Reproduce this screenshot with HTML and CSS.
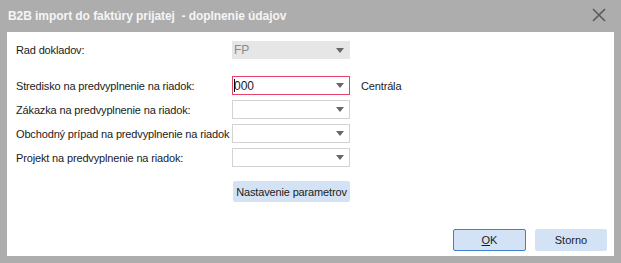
FILE: index.html
```html
<!DOCTYPE html>
<html lang="sk">
<head>
  <meta charset="UTF-8" />
  <title>B2B import do faktúry prijatej</title>
  <link rel="stylesheet" href="styles.css">
</head>
<body>
  <div class="window">
    <div class="titlebar">
      <span class="title">B2B import do faktúry prijatej&nbsp; - doplnenie údajov</span>
      <span class="close">
        <svg width="16" height="16" viewBox="0 0 16 16">
          <path d="M2 2 L14 14 M14 2 L2 14" stroke="#5a5a5a" stroke-width="1.6" fill="none" />
        </svg>
      </span>
    </div>

    <div class="content">
      <div class="row first">
        <label>Rad dokladov:</label>
        <div class="combo disabled"><span class="value">FP</span><span class="arrow"></span></div>
      </div>

      <div class="rows">
        <div class="row">
          <label>Stredisko na predvyplnenie na riadok:</label>
          <div class="combo focused"><span class="value"><span class="caret"></span>000</span><span class="arrow"></span></div>
          <span class="desc">Centrála</span>
        </div>
        <div class="row">
          <label>Zákazka na predvyplnenie na riadok:</label>
          <div class="combo"><span class="value"></span><span class="arrow"></span></div>
        </div>
        <div class="row">
          <label>Obchodný prípad na predvyplnenie na riadok</label>
          <div class="combo"><span class="value"></span><span class="arrow"></span></div>
        </div>
        <div class="row">
          <label>Projekt na predvyplnenie na riadok:</label>
          <div class="combo"><span class="value"></span><span class="arrow"></span></div>
        </div>
      </div>

      <button class="btn params">Nastavenie parametrov</button>

      <div class="footer">
        <button class="btn default"><u>O</u>K</button>
        <button class="btn">Storno</button>
      </div>
    </div>
  </div>
</body>
</html>
```

FILE: styles.css
```css
/* ======================
   Base
   ====================== */
*, *::before, *::after {
  box-sizing: border-box;
  margin: 0;
  padding: 0;
}
html, body {
  width: 621px;
  height: 263px;
  overflow: hidden;
  font-family: 'Liberation Sans', Arial, sans-serif;
  font-size: 11px;
  color: #1b1b1b;
}

/* ======================
   Window
   ====================== */
.window {
  display: flex;
  flex-direction: column;
  width: 621px;
  height: 263px;
  background-color: #adadad;
  padding: 0 7px 7px 7px;
}
.titlebar {
  display: flex;
  align-items: center;
  justify-content: space-between;
  height: 32px;
  padding-left: 1px;
}
.title {
  color: #f5f5f5;
  font-weight: bold;
  font-size: 12px;
  letter-spacing: -0.06px;
}
.close {
  display: flex;
  width: 16px;
  height: 16px;
  margin-right: 7px;
  margin-top: -2px;
}

/* ======================
   Content
   ====================== */
.content {
  flex: 1;
  display: flex;
  flex-direction: column;
  background-color: #fff;
  padding: 9px 7px 5px 9px;
}
.row {
  display: flex;
  align-items: center;
  height: 19px;
}
.row.first {
  height: 18px;
  margin-bottom: 17px;
}
.rows {
  display: flex;
  flex-direction: column;
  gap: 5px;
}
.row label {
  width: 216px;
  white-space: nowrap;
  letter-spacing: -0.15px;
}
.combo {
  display: flex;
  align-items: center;
  width: 118px;
  height: 100%;
  border: 1px solid #d3d3d3;
  background-color: #fff;
}
.combo.disabled {
  border-color: #e6e6e6;
  background-color: #e6e6e6;
  color: #8a8a8a;
}
.combo.focused {
  border-color: #e8436a;
}
.combo .value {
  flex: 1;
  position: relative;
  padding-left: 1px;
  font-size: 12px;
}
.caret {
  position: absolute;
  left: 1px;
  top: 0;
  width: 1px;
  height: 13px;
  background-color: #000;
}
.arrow {
  width: 0;
  height: 0;
  margin-right: 5px;
  border-left: 4px solid transparent;
  border-right: 4px solid transparent;
  border-top: 5px solid #686868;
}
.desc {
  margin-left: 11px;
  letter-spacing: -0.15px;
}

/* ======================
   Buttons
   ====================== */
.btn {
  font-family: 'Liberation Sans', Arial, sans-serif;
  font-size: 11px;
  color: #1b1b1b;
  background-color: #d3e3f5;
  border: 1px solid #d3e3f5;
  border-radius: 2px;
  height: 22px;
}
.btn.params {
  align-self: flex-start;
  width: 117px;
  height: 21px;
  margin-top: 14px;
  margin-left: 217px;
  letter-spacing: -0.15px;
}
.footer {
  display: flex;
  justify-content: flex-end;
  gap: 9px;
  margin-top: auto;
}
.footer .btn {
  width: 72px;
}
.btn.default {
  width: 73px;
  border-color: #3d7fd3;
}
```
